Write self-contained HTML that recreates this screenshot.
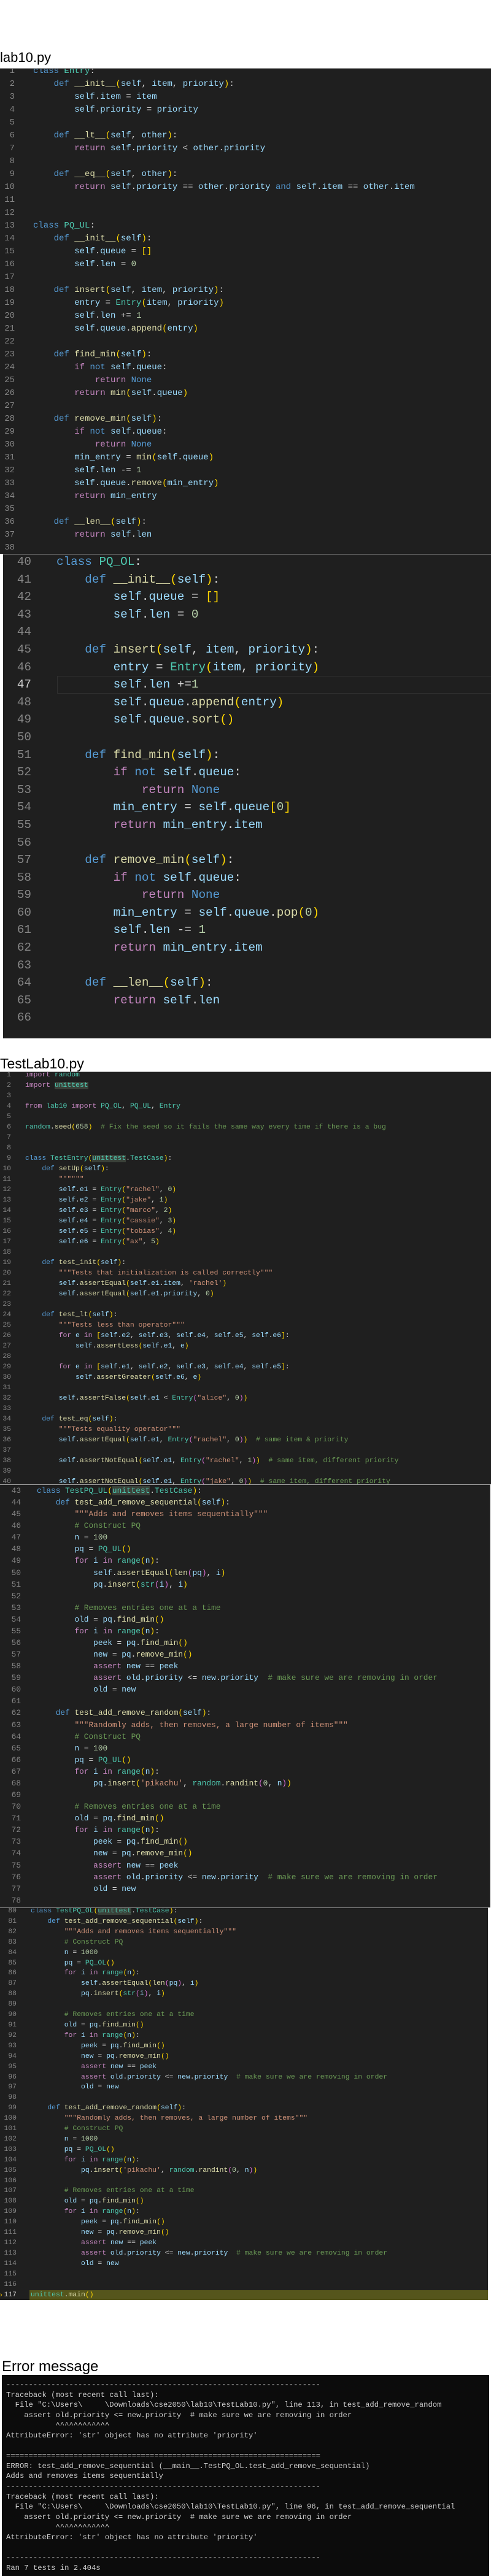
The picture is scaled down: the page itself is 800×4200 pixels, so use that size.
<!DOCTYPE html>
<html><head><meta charset="utf-8"><style>
*{margin:0;padding:0;box-sizing:border-box}
body{width:800px;height:4200px;background:#fff;position:relative;overflow:hidden;font-family:"Liberation Sans",sans-serif}
.t{position:absolute;left:0;color:#000;white-space:nowrap}
.blk{position:absolute;background:#1f1f1f;overflow:hidden}
pre{position:absolute;font-family:"Liberation Mono",monospace;color:#d4d4d4;white-space:pre;margin:0}
pre.ln{color:#858585;text-align:right}
kw{color:#569cd6}ct{color:#c586c0}fn{color:#dcdcaa}vr{color:#9cdcfe}ty{color:#4ec9b0}st{color:#ce9178}nm{color:#b5cea8}cm{color:#6a9955}b1{color:#ffd700}b2{color:#da70d6}b3{color:#179fff}
hl{background:#3a4139;color:#4ec9b0}
.term{position:absolute;left:3px;top:3872px;width:794px;height:328px;background:#0c0c0c}
.term pre{color:#cccccc;left:7px;top:8px;font-size:12.2px;line-height:16.6px}
</style></head><body>

<div class="t" style="top:81px;font-size:22px;line-height:26px">lab10.py</div>
<div class="blk" style="top:111px;left:0;width:800px;height:792px;border-top:1px solid #9a9a9a">
<pre class="ln" style="left:0;width:24px;top:-6px;font-size:14px;line-height:21px">1
2
3
4
5
6
7
8
9
10
11
12
13
14
15
16
17
18
19
20
21
22
23
24
25
26
27
28
29
30
31
32
33
34
35
36
37
38</pre>
<pre style="left:54px;top:-6px;font-size:14px;line-height:21px"><kw>class</kw> <ty>Entry</ty>:
    <kw>def</kw> <fn>__init__</fn><b1>(</b1><vr>self</vr>, <vr>item</vr>, <vr>priority</vr><b1>)</b1>:
        <vr>self</vr>.<vr>item</vr> = <vr>item</vr>
        <vr>self</vr>.<vr>priority</vr> = <vr>priority</vr>

    <kw>def</kw> <fn>__lt__</fn><b1>(</b1><vr>self</vr>, <vr>other</vr><b1>)</b1>:
        <ct>return</ct> <vr>self</vr>.<vr>priority</vr> &lt; <vr>other</vr>.<vr>priority</vr>

    <kw>def</kw> <fn>__eq__</fn><b1>(</b1><vr>self</vr>, <vr>other</vr><b1>)</b1>:
        <ct>return</ct> <vr>self</vr>.<vr>priority</vr> == <vr>other</vr>.<vr>priority</vr> <kw>and</kw> <vr>self</vr>.<vr>item</vr> == <vr>other</vr>.<vr>item</vr>


<kw>class</kw> <ty>PQ_UL</ty>:
    <kw>def</kw> <fn>__init__</fn><b1>(</b1><vr>self</vr><b1>)</b1>:
        <vr>self</vr>.<vr>queue</vr> = <b1>[]</b1>
        <vr>self</vr>.<vr>len</vr> = <nm>0</nm>

    <kw>def</kw> <fn>insert</fn><b1>(</b1><vr>self</vr>, <vr>item</vr>, <vr>priority</vr><b1>)</b1>:
        <vr>entry</vr> = <ty>Entry</ty><b1>(</b1><vr>item</vr>, <vr>priority</vr><b1>)</b1>
        <vr>self</vr>.<vr>len</vr> += <nm>1</nm>
        <vr>self</vr>.<vr>queue</vr>.<fn>append</fn><b1>(</b1><vr>entry</vr><b1>)</b1>

    <kw>def</kw> <fn>find_min</fn><b1>(</b1><vr>self</vr><b1>)</b1>:
        <ct>if</ct> <kw>not</kw> <vr>self</vr>.<vr>queue</vr>:
            <ct>return</ct> <kw>None</kw>
        <ct>return</ct> <fn>min</fn><b1>(</b1><vr>self</vr>.<vr>queue</vr><b1>)</b1>

    <kw>def</kw> <fn>remove_min</fn><b1>(</b1><vr>self</vr><b1>)</b1>:
        <ct>if</ct> <kw>not</kw> <vr>self</vr>.<vr>queue</vr>:
            <ct>return</ct> <kw>None</kw>
        <vr>min_entry</vr> = <fn>min</fn><b1>(</b1><vr>self</vr>.<vr>queue</vr><b1>)</b1>
        <vr>self</vr>.<vr>len</vr> -= <nm>1</nm>
        <vr>self</vr>.<vr>queue</vr>.<fn>remove</fn><b1>(</b1><vr>min_entry</vr><b1>)</b1>
        <ct>return</ct> <vr>min_entry</vr>

    <kw>def</kw> <fn>__len__</fn><b1>(</b1><vr>self</vr><b1>)</b1>:
        <ct>return</ct> <vr>self</vr>.<vr>len</vr>
</pre>
</div>

<div class="blk" style="top:903px;left:5px;width:795px;height:790px;border-top:1px solid #9a9a9a">
<div style="position:absolute;left:88px;top:198px;width:720px;height:29px;border:1px solid #2f2f2f"></div>
<pre class="ln" style="left:0;width:46px;top:-2px;font-size:19.3px;line-height:28.6px">40
41
42
43
44
45
46
<span style="color:#cccccc">47</span>
48
49
50
51
52
53
54
55
56
57
58
59
60
61
62
63
64
65
66</pre>
<pre style="left:87px;top:-2px;font-size:19.3px;line-height:28.6px"><kw>class</kw> <ty>PQ_OL</ty>:
    <kw>def</kw> <fn>__init__</fn><b1>(</b1><vr>self</vr><b1>)</b1>:
        <vr>self</vr>.<vr>queue</vr> = <b1>[]</b1>
        <vr>self</vr>.<vr>len</vr> = <nm>0</nm>

    <kw>def</kw> <fn>insert</fn><b1>(</b1><vr>self</vr>, <vr>item</vr>, <vr>priority</vr><b1>)</b1>:
        <vr>entry</vr> = <ty>Entry</ty><b1>(</b1><vr>item</vr>, <vr>priority</vr><b1>)</b1>
        <vr>self</vr>.<vr>len</vr> +=<nm>1</nm>
        <vr>self</vr>.<vr>queue</vr>.<fn>append</fn><b1>(</b1><vr>entry</vr><b1>)</b1>
        <vr>self</vr>.<vr>queue</vr>.<fn>sort</fn><b1>()</b1>

    <kw>def</kw> <fn>find_min</fn><b1>(</b1><vr>self</vr><b1>)</b1>:
        <ct>if</ct> <kw>not</kw> <vr>self</vr>.<vr>queue</vr>:
            <ct>return</ct> <kw>None</kw>
        <vr>min_entry</vr> = <vr>self</vr>.<vr>queue</vr><b1>[</b1><nm>0</nm><b1>]</b1>
        <ct>return</ct> <vr>min_entry</vr>.<vr>item</vr>

    <kw>def</kw> <fn>remove_min</fn><b1>(</b1><vr>self</vr><b1>)</b1>:
        <ct>if</ct> <kw>not</kw> <vr>self</vr>.<vr>queue</vr>:
            <ct>return</ct> <kw>None</kw>
        <vr>min_entry</vr> = <vr>self</vr>.<vr>queue</vr>.<fn>pop</fn><b1>(</b1><nm>0</nm><b1>)</b1>
        <vr>self</vr>.<vr>len</vr> -= <nm>1</nm>
        <ct>return</ct> <vr>min_entry</vr>.<vr>item</vr>

    <kw>def</kw> <fn>__len__</fn><b1>(</b1><vr>self</vr><b1>)</b1>:
        <ct>return</ct> <vr>self</vr>.<vr>len</vr>
</pre>
</div>

<div class="t" style="top:1721px;font-size:23px;line-height:26px">TestLab10.py</div>
<div class="blk" style="top:1747px;left:0;width:800px;height:673px;border-top:1px solid #9a9a9a">
<pre class="ln" style="left:0;width:18px;top:-3px;font-size:11.4px;line-height:17px">1
2
3
4
5
6
7
8
9
10
11
12
13
14
15
16
17
18
19
20
21
22
23
24
25
26
27
28
29
30
31
32
33
34
35
36
37
38
39
40</pre>
<pre style="left:41px;top:-3px;font-size:11.4px;line-height:17px"><ct>import</ct> <ty>random</ty>
<ct>import</ct> <hl>unittest</hl>

<ct>from</ct> <ty>lab10</ty> <ct>import</ct> <ty>PQ_OL</ty>, <ty>PQ_UL</ty>, <ty>Entry</ty>

<ty>random</ty>.<fn>seed</fn><b1>(</b1><nm>658</nm><b1>)</b1>  <cm># Fix the seed so it fails the same way every time if there is a bug</cm>


<kw>class</kw> <ty>TestEntry</ty><b1>(</b1><hl>unittest</hl>.<ty>TestCase</ty><b1>)</b1>:
    <kw>def</kw> <fn>setUp</fn><b1>(</b1><vr>self</vr><b1>)</b1>:
        <st>""""""</st>
        <vr>self</vr>.<vr>e1</vr> = <ty>Entry</ty><b1>(</b1><st>"rachel"</st>, <nm>0</nm><b1>)</b1>
        <vr>self</vr>.<vr>e2</vr> = <ty>Entry</ty><b1>(</b1><st>"jake"</st>, <nm>1</nm><b1>)</b1>
        <vr>self</vr>.<vr>e3</vr> = <ty>Entry</ty><b1>(</b1><st>"marco"</st>, <nm>2</nm><b1>)</b1>
        <vr>self</vr>.<vr>e4</vr> = <ty>Entry</ty><b1>(</b1><st>"cassie"</st>, <nm>3</nm><b1>)</b1>
        <vr>self</vr>.<vr>e5</vr> = <ty>Entry</ty><b1>(</b1><st>"tobias"</st>, <nm>4</nm><b1>)</b1>
        <vr>self</vr>.<vr>e6</vr> = <ty>Entry</ty><b1>(</b1><st>"ax"</st>, <nm>5</nm><b1>)</b1>

    <kw>def</kw> <fn>test_init</fn><b1>(</b1><vr>self</vr><b1>)</b1>:
        <st>"""Tests that initialization is called correctly"""</st>
        <vr>self</vr>.<fn>assertEqual</fn><b1>(</b1><vr>self</vr>.<vr>e1</vr>.<vr>item</vr>, <st>'rachel'</st><b1>)</b1>
        <vr>self</vr>.<fn>assertEqual</fn><b1>(</b1><vr>self</vr>.<vr>e1</vr>.<vr>priority</vr>, <nm>0</nm><b1>)</b1>

    <kw>def</kw> <fn>test_lt</fn><b1>(</b1><vr>self</vr><b1>)</b1>:
        <st>"""Tests less than operator"""</st>
        <ct>for</ct> <vr>e</vr> <ct>in</ct> <b1>[</b1><vr>self</vr>.<vr>e2</vr>, <vr>self</vr>.<vr>e3</vr>, <vr>self</vr>.<vr>e4</vr>, <vr>self</vr>.<vr>e5</vr>, <vr>self</vr>.<vr>e6</vr><b1>]</b1>:
            <vr>self</vr>.<fn>assertLess</fn><b1>(</b1><vr>self</vr>.<vr>e1</vr>, <vr>e</vr><b1>)</b1>

        <ct>for</ct> <vr>e</vr> <ct>in</ct> <b1>[</b1><vr>self</vr>.<vr>e1</vr>, <vr>self</vr>.<vr>e2</vr>, <vr>self</vr>.<vr>e3</vr>, <vr>self</vr>.<vr>e4</vr>, <vr>self</vr>.<vr>e5</vr><b1>]</b1>:
            <vr>self</vr>.<fn>assertGreater</fn><b1>(</b1><vr>self</vr>.<vr>e6</vr>, <vr>e</vr><b1>)</b1>

        <vr>self</vr>.<fn>assertFalse</fn><b1>(</b1><vr>self</vr>.<vr>e1</vr> &lt; <ty>Entry</ty><b2>(</b2><st>"alice"</st>, <nm>0</nm><b2>)</b2><b1>)</b1>

    <kw>def</kw> <fn>test_eq</fn><b1>(</b1><vr>self</vr><b1>)</b1>:
        <st>"""Tests equality operator"""</st>
        <vr>self</vr>.<fn>assertEqual</fn><b1>(</b1><vr>self</vr>.<vr>e1</vr>, <ty>Entry</ty><b2>(</b2><st>"rachel"</st>, <nm>0</nm><b2>)</b2><b1>)</b1>  <cm># same item &amp; priority</cm>

        <vr>self</vr>.<fn>assertNotEqual</fn><b1>(</b1><vr>self</vr>.<vr>e1</vr>, <ty>Entry</ty><b2>(</b2><st>"rachel"</st>, <nm>1</nm><b2>)</b2><b1>)</b1>  <cm># same item, different priority</cm>

        <vr>self</vr>.<fn>assertNotEqual</fn><b1>(</b1><vr>self</vr>.<vr>e1</vr>, <ty>Entry</ty><b2>(</b2><st>"jake"</st>, <nm>0</nm><b2>)</b2><b1>)</b1>  <cm># same item, different priority</cm></pre>
</div>

<div class="blk" style="top:2420px;left:0;width:799px;height:690px;border-top:1px solid #9a9a9a;border-right:1px solid #555">
<pre class="ln" style="left:0;width:34px;top:0px;font-size:12.8px;line-height:19.08px">43
44
45
46
47
48
49
50
51
52
53
54
55
56
57
58
59
60
61
62
63
64
65
66
67
68
69
70
71
72
73
74
75
76
77
78</pre>
<pre style="left:60px;top:0px;font-size:12.8px;line-height:19.08px"><kw>class</kw> <ty>TestPQ_UL</ty><b1>(</b1><hl>unittest</hl>.<ty>TestCase</ty><b1>)</b1>:
    <kw>def</kw> <fn>test_add_remove_sequential</fn><b1>(</b1><vr>self</vr><b1>)</b1>:
        <st>"""Adds and removes items sequentially"""</st>
        <cm># Construct PQ</cm>
        <vr>n</vr> = <nm>100</nm>
        <vr>pq</vr> = <ty>PQ_UL</ty><b1>()</b1>
        <ct>for</ct> <vr>i</vr> <ct>in</ct> <ty>range</ty><b1>(</b1><vr>n</vr><b1>)</b1>:
            <vr>self</vr>.<fn>assertEqual</fn><b1>(</b1><fn>len</fn><b2>(</b2><vr>pq</vr><b2>)</b2>, <vr>i</vr><b1>)</b1>
            <vr>pq</vr>.<fn>insert</fn><b1>(</b1><ty>str</ty><b2>(</b2><vr>i</vr><b2>)</b2>, <vr>i</vr><b1>)</b1>

        <cm># Removes entries one at a time</cm>
        <vr>old</vr> = <vr>pq</vr>.<fn>find_min</fn><b1>()</b1>
        <ct>for</ct> <vr>i</vr> <ct>in</ct> <ty>range</ty><b1>(</b1><vr>n</vr><b1>)</b1>:
            <vr>peek</vr> = <vr>pq</vr>.<fn>find_min</fn><b1>()</b1>
            <vr>new</vr> = <vr>pq</vr>.<fn>remove_min</fn><b1>()</b1>
            <ct>assert</ct> <vr>new</vr> == <vr>peek</vr>
            <ct>assert</ct> <vr>old</vr>.<vr>priority</vr> &lt;= <vr>new</vr>.<vr>priority</vr>  <cm># make sure we are removing in order</cm>
            <vr>old</vr> = <vr>new</vr>

    <kw>def</kw> <fn>test_add_remove_random</fn><b1>(</b1><vr>self</vr><b1>)</b1>:
        <st>"""Randomly adds, then removes, a large number of items"""</st>
        <cm># Construct PQ</cm>
        <vr>n</vr> = <nm>100</nm>
        <vr>pq</vr> = <ty>PQ_UL</ty><b1>()</b1>
        <ct>for</ct> <vr>i</vr> <ct>in</ct> <ty>range</ty><b1>(</b1><vr>n</vr><b1>)</b1>:
            <vr>pq</vr>.<fn>insert</fn><b1>(</b1><st>'pikachu'</st>, <ty>random</ty>.<fn>randint</fn><b2>(</b2><nm>0</nm>, <vr>n</vr><b2>)</b2><b1>)</b1>

        <cm># Removes entries one at a time</cm>
        <vr>old</vr> = <vr>pq</vr>.<fn>find_min</fn><b1>()</b1>
        <ct>for</ct> <vr>i</vr> <ct>in</ct> <ty>range</ty><b1>(</b1><vr>n</vr><b1>)</b1>:
            <vr>peek</vr> = <vr>pq</vr>.<fn>find_min</fn><b1>()</b1>
            <vr>new</vr> = <vr>pq</vr>.<fn>remove_min</fn><b1>()</b1>
            <ct>assert</ct> <vr>new</vr> == <vr>peek</vr>
            <ct>assert</ct> <vr>old</vr>.<vr>priority</vr> &lt;= <vr>new</vr>.<vr>priority</vr>  <cm># make sure we are removing in order</cm>
            <vr>old</vr> = <vr>new</vr>
</pre>
</div>

<div class="blk" style="top:3110px;left:0;width:795px;height:640px;border-top:1px solid #9a9a9a">
<div style="position:absolute;left:48px;top:623px;width:760px;height:17px;background:#55551c"></div>
<div style="position:absolute;left:0;top:623px;font-size:11px;line-height:17px;color:#ffcc00;font-family:'Liberation Sans',sans-serif">&#8250;</div>
<pre class="ln" style="left:0;width:27px;top:-3px;font-size:11.4px;line-height:16.9px">80
81
82
83
84
85
86
87
88
89
90
91
92
93
94
95
96
97
98
99
100
101
102
103
104
105
106
107
108
109
110
111
112
113
114
115
116
<span style="color:#cccccc">117</span></pre>
<pre style="left:50px;top:-3px;font-size:11.4px;line-height:16.9px"><kw>class</kw> <ty>TestPQ_OL</ty><b1>(</b1><hl>unittest</hl>.<ty>TestCase</ty><b1>)</b1>:
    <kw>def</kw> <fn>test_add_remove_sequential</fn><b1>(</b1><vr>self</vr><b1>)</b1>:
        <st>"""Adds and removes items sequentially"""</st>
        <cm># Construct PQ</cm>
        <vr>n</vr> = <nm>1000</nm>
        <vr>pq</vr> = <ty>PQ_OL</ty><b1>()</b1>
        <ct>for</ct> <vr>i</vr> <ct>in</ct> <ty>range</ty><b1>(</b1><vr>n</vr><b1>)</b1>:
            <vr>self</vr>.<fn>assertEqual</fn><b1>(</b1><fn>len</fn><b2>(</b2><vr>pq</vr><b2>)</b2>, <vr>i</vr><b1>)</b1>
            <vr>pq</vr>.<fn>insert</fn><b1>(</b1><ty>str</ty><b2>(</b2><vr>i</vr><b2>)</b2>, <vr>i</vr><b1>)</b1>

        <cm># Removes entries one at a time</cm>
        <vr>old</vr> = <vr>pq</vr>.<fn>find_min</fn><b1>()</b1>
        <ct>for</ct> <vr>i</vr> <ct>in</ct> <ty>range</ty><b1>(</b1><vr>n</vr><b1>)</b1>:
            <vr>peek</vr> = <vr>pq</vr>.<fn>find_min</fn><b1>()</b1>
            <vr>new</vr> = <vr>pq</vr>.<fn>remove_min</fn><b1>()</b1>
            <ct>assert</ct> <vr>new</vr> == <vr>peek</vr>
            <ct>assert</ct> <vr>old</vr>.<vr>priority</vr> &lt;= <vr>new</vr>.<vr>priority</vr>  <cm># make sure we are removing in order</cm>
            <vr>old</vr> = <vr>new</vr>

    <kw>def</kw> <fn>test_add_remove_random</fn><b1>(</b1><vr>self</vr><b1>)</b1>:
        <st>"""Randomly adds, then removes, a large number of items"""</st>
        <cm># Construct PQ</cm>
        <vr>n</vr> = <nm>1000</nm>
        <vr>pq</vr> = <ty>PQ_OL</ty><b1>()</b1>
        <ct>for</ct> <vr>i</vr> <ct>in</ct> <ty>range</ty><b1>(</b1><vr>n</vr><b1>)</b1>:
            <vr>pq</vr>.<fn>insert</fn><b1>(</b1><st>'pikachu'</st>, <ty>random</ty>.<fn>randint</fn><b2>(</b2><nm>0</nm>, <vr>n</vr><b2>)</b2><b1>)</b1>

        <cm># Removes entries one at a time</cm>
        <vr>old</vr> = <vr>pq</vr>.<fn>find_min</fn><b1>()</b1>
        <ct>for</ct> <vr>i</vr> <ct>in</ct> <ty>range</ty><b1>(</b1><vr>n</vr><b1>)</b1>:
            <vr>peek</vr> = <vr>pq</vr>.<fn>find_min</fn><b1>()</b1>
            <vr>new</vr> = <vr>pq</vr>.<fn>remove_min</fn><b1>()</b1>
            <ct>assert</ct> <vr>new</vr> == <vr>peek</vr>
            <ct>assert</ct> <vr>old</vr>.<vr>priority</vr> &lt;= <vr>new</vr>.<vr>priority</vr>  <cm># make sure we are removing in order</cm>
            <vr>old</vr> = <vr>new</vr>


<ty>unittest</ty>.<fn>main</fn><b1>()</b1></pre>
</div>

<div class="t" style="top:3845px;left:3px;font-size:24px;line-height:28px">Error message</div>
<div class="term"><pre>----------------------------------------------------------------------
Traceback (most recent call last):
  File "C:\Users\     \Downloads\cse2050\lab10\TestLab10.py", line 113, in test_add_remove_random
    assert old.priority &lt;= new.priority  # make sure we are removing in order
           ^^^^^^^^^^^^
AttributeError: 'str' object has no attribute 'priority'

======================================================================
ERROR: test_add_remove_sequential (__main__.TestPQ_OL.test_add_remove_sequential)
Adds and removes items sequentially
----------------------------------------------------------------------
Traceback (most recent call last):
  File "C:\Users\     \Downloads\cse2050\lab10\TestLab10.py", line 96, in test_add_remove_sequential
    assert old.priority &lt;= new.priority  # make sure we are removing in order
           ^^^^^^^^^^^^
AttributeError: 'str' object has no attribute 'priority'

----------------------------------------------------------------------
Ran 7 tests in 2.404s</pre></div>

</body></html>
